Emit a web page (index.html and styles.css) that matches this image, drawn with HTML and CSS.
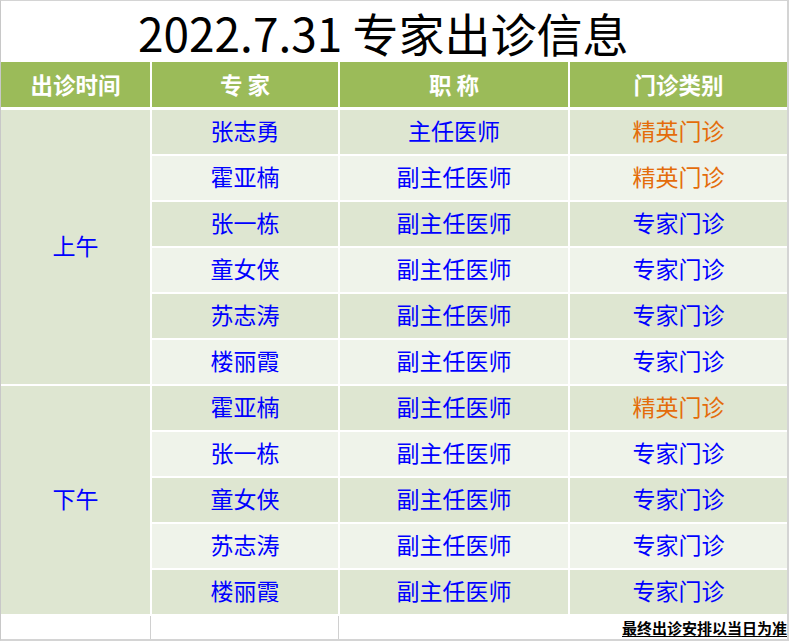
FILE: index.html
```html
<!DOCTYPE html>
<html lang="zh">
<head>
<meta charset="utf-8">
<link rel="stylesheet" href="styles.css">
</head>
<body>
<div class="sheet">
  <div class="title"><span>2022.7.31 专家出诊信息</span></div>
  <div class="table">
    <div class="th">出诊时间</div>
    <div class="th">专 家</div>
    <div class="th">职 称</div>
    <div class="th">门诊类别</div>

    <div class="td period am">上午</div>
    <div class="td d">张志勇</div><div class="td d">主任医师</div><div class="td d orange">精英门诊</div>
    <div class="td l">霍亚楠</div><div class="td l">副主任医师</div><div class="td l orange">精英门诊</div>
    <div class="td d">张一栋</div><div class="td d">副主任医师</div><div class="td d">专家门诊</div>
    <div class="td l">童女侠</div><div class="td l">副主任医师</div><div class="td l">专家门诊</div>
    <div class="td d">苏志涛</div><div class="td d">副主任医师</div><div class="td d">专家门诊</div>
    <div class="td l">楼丽霞</div><div class="td l">副主任医师</div><div class="td l">专家门诊</div>

    <div class="td period pm">下午</div>
    <div class="td d">霍亚楠</div><div class="td d">副主任医师</div><div class="td d orange">精英门诊</div>
    <div class="td l">张一栋</div><div class="td l">副主任医师</div><div class="td l">专家门诊</div>
    <div class="td d">童女侠</div><div class="td d">副主任医师</div><div class="td d">专家门诊</div>
    <div class="td l">苏志涛</div><div class="td l">副主任医师</div><div class="td l">专家门诊</div>
    <div class="td d">楼丽霞</div><div class="td d">副主任医师</div><div class="td d">专家门诊</div>

    <div class="foot grid-line"></div>
    <div class="foot grid-line"></div>
    <div class="foot"></div>
    <div class="foot note"><span>最终出诊安排以当日为准</span></div>
  </div>
</div>
</body>
</html>
```

FILE: styles.css
```css
html, body {
  margin: 0;
  padding: 0;
  background: #ffffff;
}

.sheet {
  width: 789px;
  height: 641px;
  box-sizing: border-box;
  border-top: 1px solid #d4d4d4;
  border-left: 1px solid #c8c8c8;
  border-right: 2px solid #d4d4d4;
  border-bottom: 2px solid #d4d4d4;
  display: flex;
  flex-direction: column;
  font-family: "Noto Sans CJK SC", "Noto Sans", sans-serif;
}

.title {
  height: 61px;
  flex: none;
  box-sizing: border-box;
  padding-left: 137px;
  padding-top: 2px;
  display: flex;
  align-items: center;
  font-size: 46px;
  line-height: 1.25;
  color: #000000;
  white-space: nowrap;
}

.table {
  flex: 1;
  display: grid;
  grid-template-columns: 149px 186px 228px 1fr;
  grid-template-rows: 46px repeat(11, 44px) 1fr;
  gap: 2px;
}

.th {
  background: #9bbb59;
  color: #ffffff;
  font-weight: bold;
  font-size: 22.5px;
  display: flex;
  align-items: center;
  justify-content: center;
  height: 45px;
  box-sizing: border-box;
  padding-bottom: 1px;
}

.td {
  display: flex;
  align-items: center;
  justify-content: center;
  font-size: 23px;
  color: #0000ff;
  box-sizing: border-box;
  padding-bottom: 4px;
}

.d { background: #dee6d1; }
.l { background: #eff3ea; }

.orange { color: #e46c0a; }

.period {
  background: #dee6d1;
}
.am { grid-row: 2 / span 6; }
.pm { grid-row: 8 / span 5; }

.foot {
  background: #ffffff;
}
.grid-line {
  margin-right: -1px;
  border-right: 1px solid #d0d0d0;
}

.note {
  display: flex;
  align-items: flex-end;
  justify-content: flex-end;
}
.note span {
  font-size: 15px;
  font-weight: bold;
  color: #000000;
  line-height: 20px;
  text-decoration: underline;
  text-underline-offset: 2px;
  white-space: nowrap;
  padding-bottom: 1px;
}
```
